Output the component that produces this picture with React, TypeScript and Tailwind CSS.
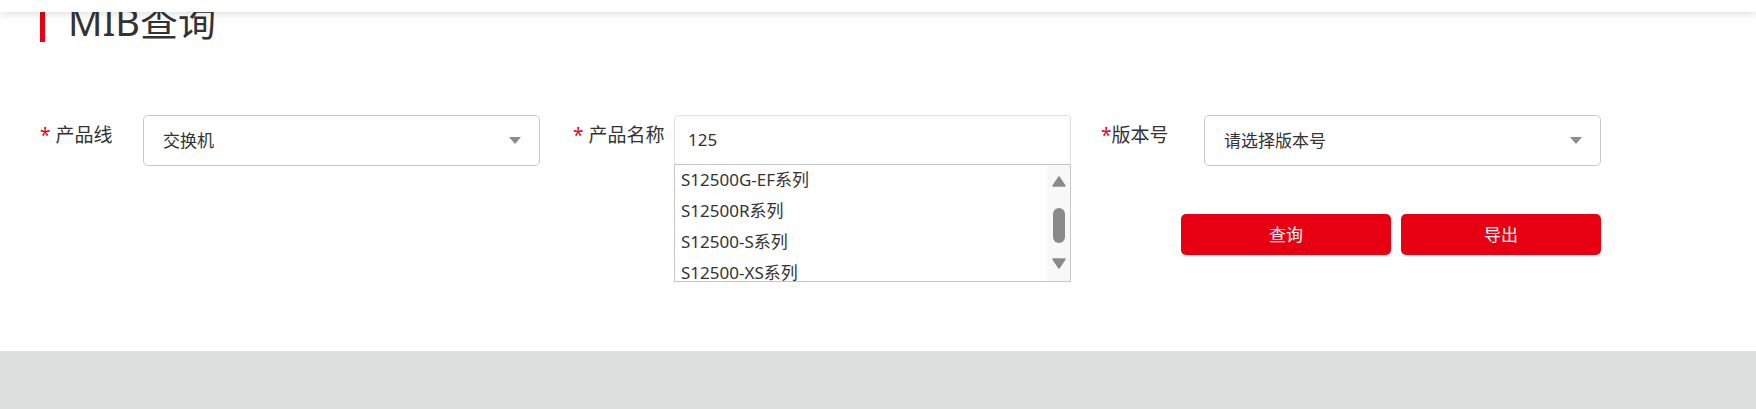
import React from "react";

const font = { fontFamily: '"Noto Sans", "Noto Sans CJK SC", sans-serif' };

function Caret() {
  return (
    <svg width="12" height="7" viewBox="0 0 12 7" className="shrink-0">
      <path d="M0 0 L12 0 L6 7 Z" fill="#8c8c8c" />
    </svg>
  );
}

function Label({ text, space = true, w }: { text: string; space?: boolean; w: string }) {
  return (
    <div className={`${w} shrink-0 pt-[8px] text-[19px] leading-[24px] text-[#333]`}>
      <span className="text-[#e60012]">*</span>
      {space ? " " : ""}
      {text}
    </div>
  );
}

function Select({ value }: { value: string }) {
  return (
    <div className="w-[397px] h-[51px] shrink-0 border border-[#c8c8c8] rounded-[5px] bg-white flex items-center justify-between pl-[19px] pr-[18px] text-[17px] text-[#333]">
      <span>{value}</span>
      <Caret />
    </div>
  );
}

const items = ["S12500G-EF系列", "S12500R系列", "S12500-S系列", "S12500-XS系列", "S12500X-AF系列"];

export default function App() {
  return (
    <div className="relative w-[1756px] h-[409px] overflow-hidden bg-white" style={font}>
      <div className="absolute top-0 left-0 right-0 h-[12px] bg-white z-10 shadow-[0_2px_9px_rgba(0,0,0,0.13)]" />
      <div className="h-[351px] bg-white">
        <div className="flex items-start h-[42px] pl-[40px]">
          <div className="mt-[10px] w-[5px] h-[32px] bg-[#e60012]" />
          <div className="ml-[23px] mt-[2px] text-[38px] leading-[38px] text-[#333]">MIB查询</div>
        </div>
        <div className="mt-[73px] w-[1601px] pl-[40px]">
          <div className="flex items-start">
            <Label text="产品线" w="w-[103px]" />
            <Select value="交换机" />
            <div className="w-[33px] shrink-0" />
            <Label text="产品名称" w="w-[101px]" />
            <div className="relative w-[397px] shrink-0">
              <div className="h-[50px] border border-[#e0e0e0] rounded-[4px] bg-white flex items-center pl-[13px] text-[17px] text-[#333]">
                125
              </div>
              <div className="absolute left-0 top-[49px] w-full h-[118px] border border-[#c6c6c6] bg-white flex overflow-hidden z-[5]">
                <div className="flex-1 overflow-hidden">
                  <div className="-mt-[1px]">
                    {items.map((t) => (
                      <div key={t} className="h-[31px] leading-[31px] pl-[6px] text-[17px] text-[#333] whitespace-nowrap">
                        {t}
                      </div>
                    ))}
                  </div>
                </div>
                <div className="w-[23px] shrink-0 bg-[#f8f8f8] flex flex-col items-center pt-[11px]">
                  <svg width="14" height="11" viewBox="0 0 14 11" className="shrink-0">
                    <path d="M7 1 L13 10 L1 10 Z" fill="#8a8a8a" stroke="#8a8a8a" strokeWidth="1.5" strokeLinejoin="round" />
                  </svg>
                  <div className="mt-[21px] w-[12px] h-[35px] shrink-0 rounded-full bg-[#8a8a8a]" />
                  <svg className="mt-[15px] shrink-0" width="14" height="11" viewBox="0 0 14 11">
                    <path d="M1 1 L13 1 L7 10 Z" fill="#8a8a8a" stroke="#8a8a8a" strokeWidth="1.5" strokeLinejoin="round" />
                  </svg>
                </div>
              </div>
            </div>
            <div className="w-[30px] shrink-0" />
            <Label text="版本号" space={false} w="w-[103px]" />
            <Select value="请选择版本号" />
          </div>
          <div className="mt-[48px] flex justify-end gap-[10px]">
            <button className="w-[210px] h-[41px] rounded-[5px] bg-[#e60012] text-white text-[17px]">查询</button>
            <button className="w-[200px] h-[41px] rounded-[5px] bg-[#e60012] text-white text-[17px]">导出</button>
          </div>
        </div>
      </div>
      <div className="h-[58px] bg-[#dcdedd]" />
    </div>
  );
}
